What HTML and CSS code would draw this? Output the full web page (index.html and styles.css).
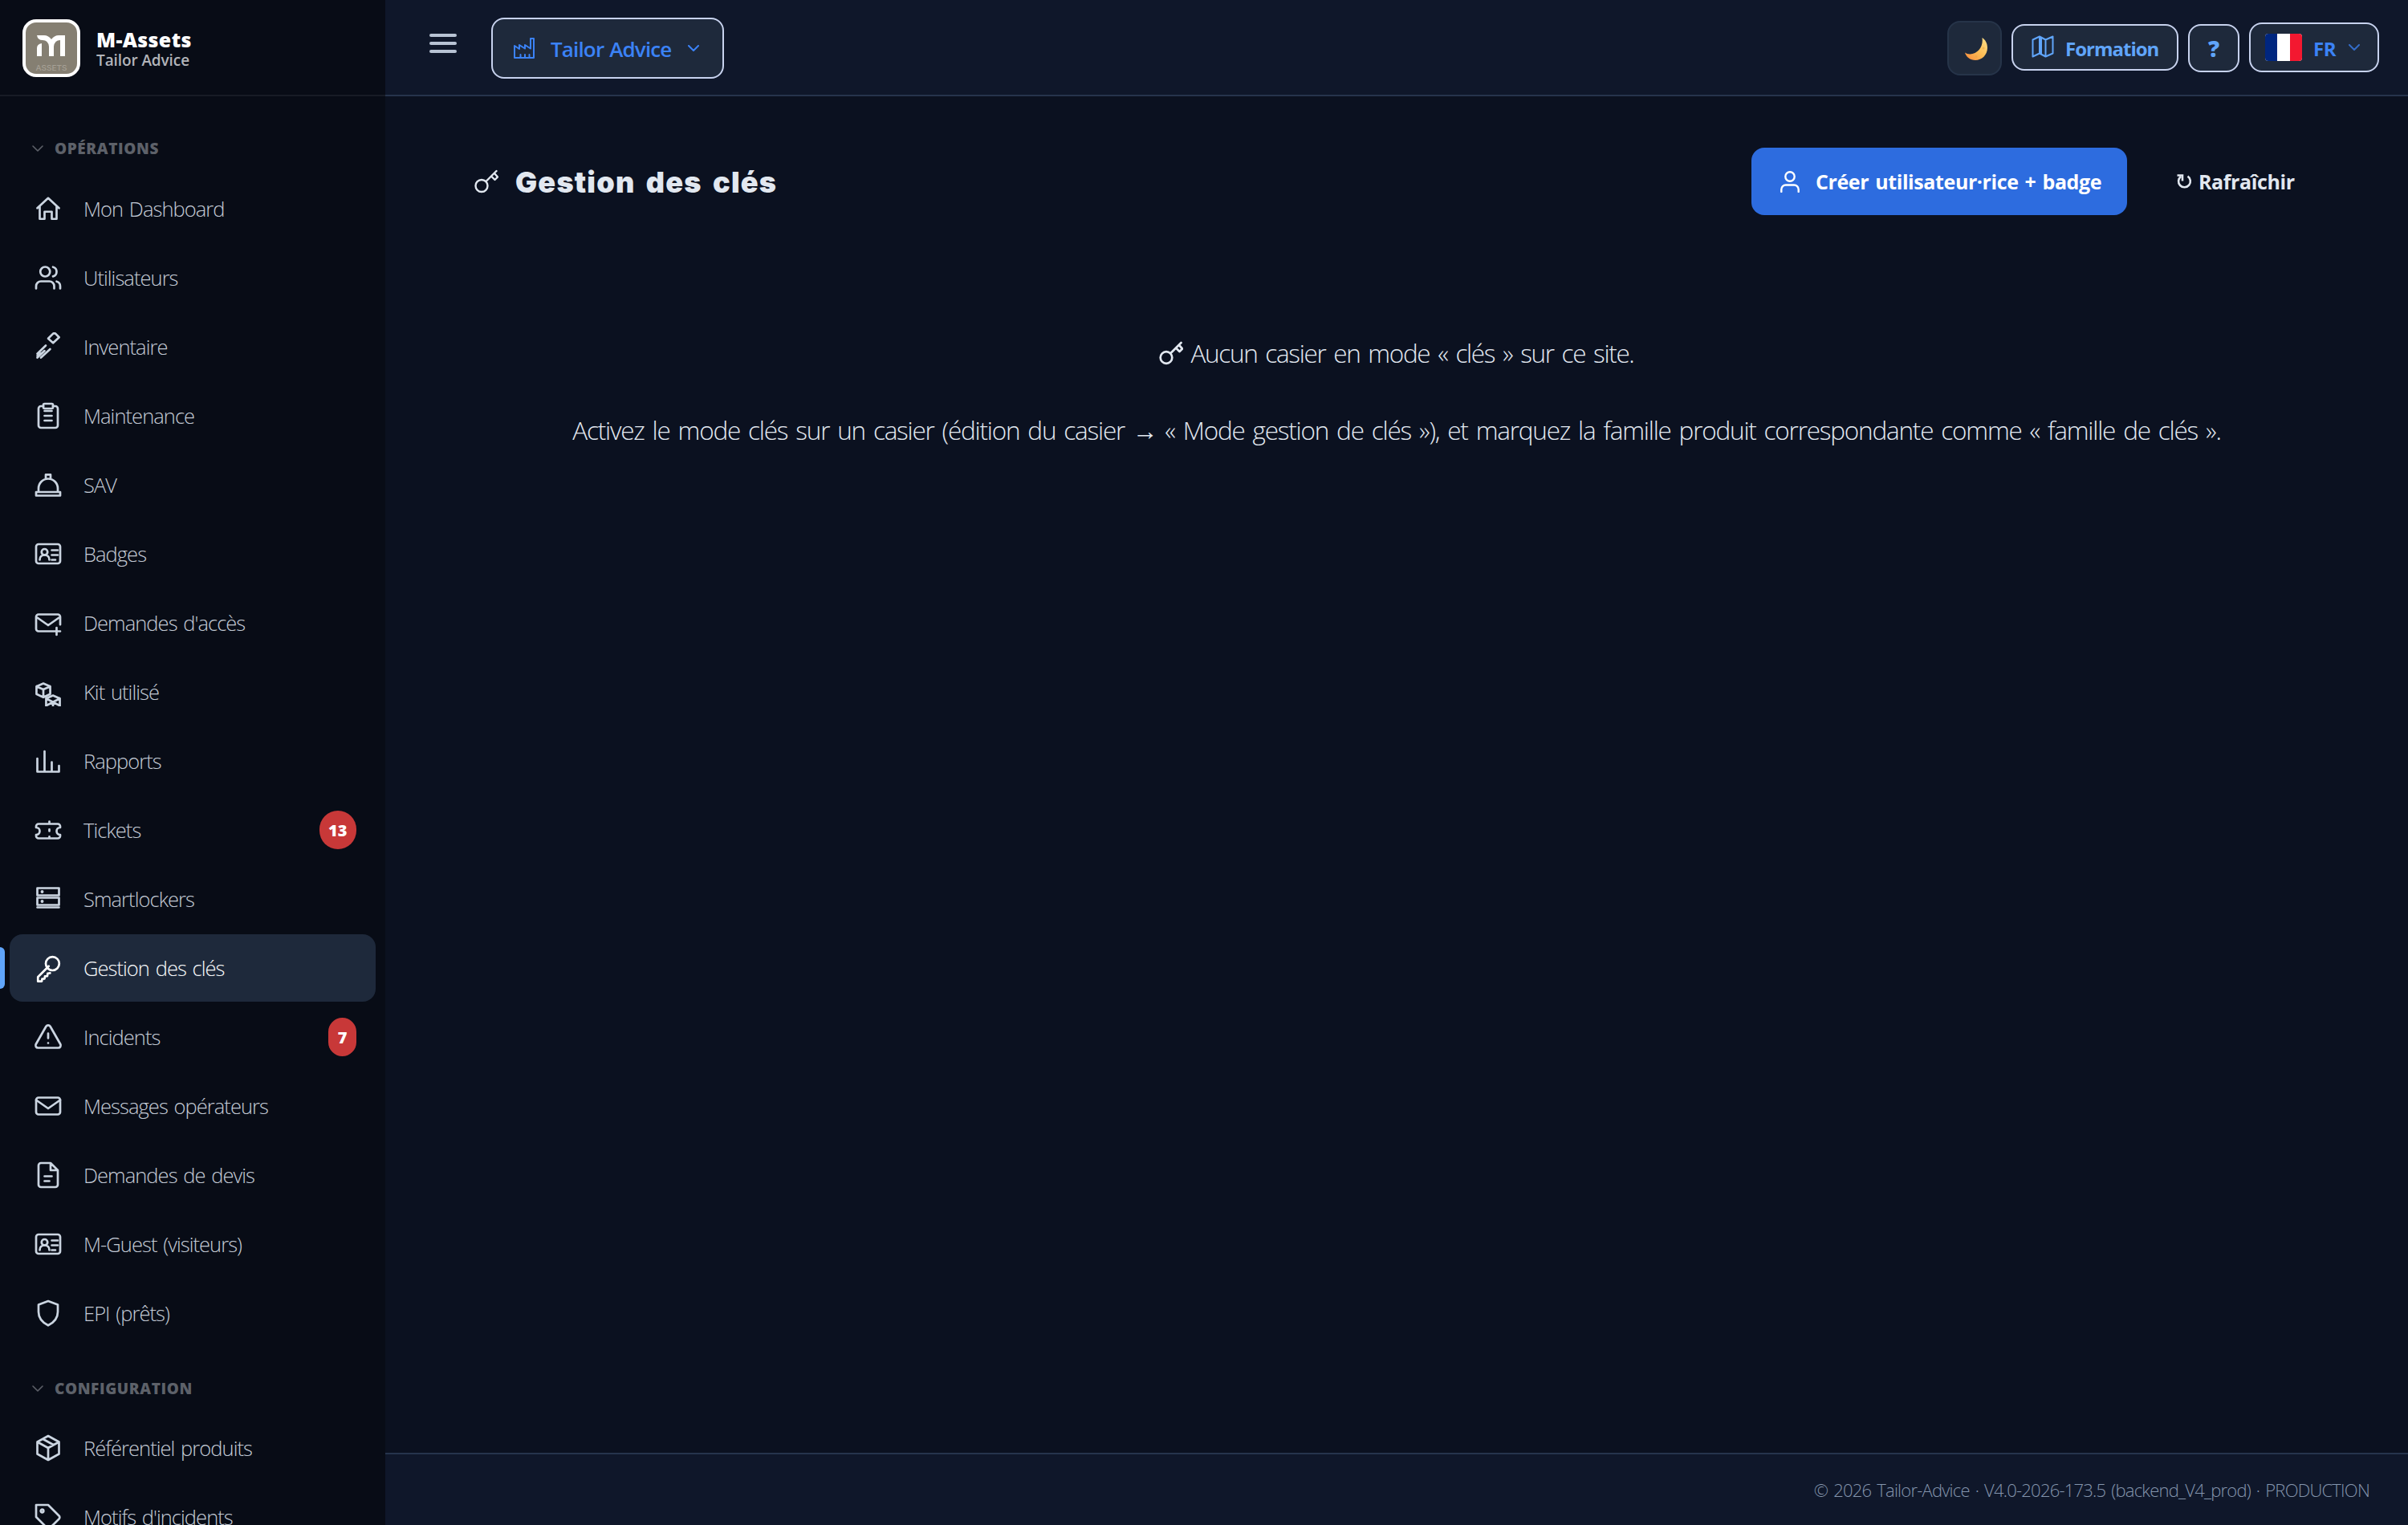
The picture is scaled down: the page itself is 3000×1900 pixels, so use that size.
FILE: index.html
```html
<!DOCTYPE html>
<html lang="fr">
<head>
<meta charset="utf-8">
<title>M-Assets – Gestion des clés</title>
<link rel="stylesheet" href="styles.css">
</head>
<body>
<div class="app">
  <aside class="sidebar">
    <div class="brand">
      <svg class="logo" viewBox="0 0 72 72"><rect x="2" y="2" width="68" height="68" rx="15" fill="#857f72" stroke="#fff" stroke-width="4"/><path d="M18 20h9q5 0 9 5 4-5 9-5h8v26h-6V26q-7 0-8 8v12h-6V34q-1-8-8-8-6 0-7-6zM18 46V36q0-5 6-6v16z" fill="#fff"/><text x="36" y="63.500" class="logo-word" text-anchor="middle" textLength="39" lengthAdjust="spacingAndGlyphs">ASSETS</text></svg>
      <div class="brand-text"><span class="brand-name">M-Assets</span><span class="brand-org">Tailor Advice</span></div>
    </div>
    <nav class="nav">
      <div class="section"><svg class="chev" viewBox="0 0 14 8"><path d="M1 1l6 6 6-6"/></svg><span>OPÉRATIONS</span></div>
      <a class="item"><svg class="ico" viewBox="0 0 24 24"><path d="M3 11.500l9-8.300 9 8.300M5 10v10.500h4V14.500h6v6h4V10"/></svg><span class="label">Mon Dashboard</span></a>
      <a class="item"><svg class="ico" viewBox="0 0 24 24"><circle cx="9.500" cy="7" r="4"/><path d="M2 21v-2a4 4 0 0 1 4-4h7a4 4 0 0 1 4 4v2M22 21v-2a4 4 0 0 0-3-3.870M16 3.130a4 4 0 0 1 0 7.750"/></svg><span class="label">Utilisateurs</span></a>
      <a class="item"><svg class="ico" viewBox="0 0 24 24"><path d="M12 5.200l4.300-4.300h1.600l3.200 3.300-5 4.700zM10 11l-7 6.800M13.600 14L6 21M3 21l6-5.600M3 19.500l3-2"/></svg><span class="label">Inventaire</span></a>
      <a class="item"><svg class="ico" viewBox="0 0 24 24"><path d="M16 4h2a2 2 0 0 1 2 2v14a2 2 0 0 1-2 2H6a2 2 0 0 1-2-2V6a2 2 0 0 1 2-2h2M9 8h6M9 12h6M9 16h6"/><rect x="8" y="2" width="8" height="4" rx="1"/></svg><span class="label">Maintenance</span></a>
      <a class="item"><svg class="ico" viewBox="0 0 24 24"><path d="M4 18v-3a8 8 0 0 1 16 0v3M10 7V3.600h4V7M2 18h20v3H2z"/></svg><span class="label">SAV</span></a>
      <a class="item"><svg class="ico" viewBox="0 0 24 24"><rect x="2" y="4" width="20" height="16" rx="2"/><circle cx="9" cy="10.500" r="2.500"/><path d="M5 17c0-2.500 1.800-4 4-4s4 1.500 4 4M15 9h5M15 13h5M15 17h3"/></svg><span class="label">Badges</span></a>
      <a class="item"><svg class="ico" viewBox="0 0 24 24"><path d="M22 13.500V7a2 2 0 0 0-2-2H4a2 2 0 0 0-2 2v10a2 2 0 0 0 2 2h18M19 16v6M2 7l10 7 10-7"/></svg><span class="label">Demandes d'accès</span></a>
      <a class="item"><svg class="ico" viewBox="0 0 24 24"><path d="M8 5l5.700 2.500v6.300L8 16.500l-5.700-2.700V7.500zM2.300 7.500L8 10l5.700-2.500M8 10v6.500M10.300 24.500v-7L16 15l5.700 2.500v7M10.300 17.500L21.700 23.500M21.700 17.500L10.300 23.500M16 21v3.500"/></svg><span class="label">Kit utilisé</span></a>
      <a class="item"><svg class="ico" viewBox="0 0 24 24"><path d="M3 10v11h18v-5M9 4v17M15 13v8"/></svg><span class="label">Rapports</span></a>
      <a class="item"><svg class="ico" viewBox="0 0 24 24"><path d="M2 10V9a2 2 0 0 1 2-2h16a2 2 0 0 1 2 2v1a3 3 0 0 0 0 6v1a2 2 0 0 1-2 2H4a2 2 0 0 1-2-2v-1a3 3 0 0 0 0-6zM13 5v2M13 11.500v1.500M13 17.500v1.500"/></svg><span class="label">Tickets</span><b class="count">13</b></a>
      <a class="item"><svg class="ico" viewBox="0 0 24 24"><path d="M3 3h18v6H3zM3 11h18v6H3zM3 19h18"/><path d="M7 6h.010M7 14h.010" stroke-width="2.600"/></svg><span class="label">Smartlockers</span></a>
      <a class="item active"><svg class="ico" viewBox="0 0 24 24"><circle cx="15.600" cy="8.400" r="5.600"/><path d="M12.500 10.500L3.500 19.500v3.600h3.200l.3-2 2-.2.300-2 2-.2.300-2.200 2-.2"/></svg><span class="label">Gestion des clés</span></a>
      <a class="item"><svg class="ico" viewBox="0 0 24 24"><path d="M10.290 3.160L1.820 18a2 2 0 0 0 1.710 3h16.940a2 2 0 0 0 1.710-3L13.710 3.160a2 2 0 0 0-3.420 0zM12 9v4M12 17h.010"/></svg><span class="label">Incidents</span><b class="count">7</b></a>
      <a class="item"><svg class="ico" viewBox="0 0 24 24"><rect x="2" y="5" width="20" height="14" rx="2"/><path d="M2 7l10 7 10-7"/></svg><span class="label">Messages opérateurs</span></a>
      <a class="item"><svg class="ico" viewBox="0 0 24 24"><path d="M14 2H6a2 2 0 0 0-2 2v16a2 2 0 0 0 2 2h12a2 2 0 0 0 2-2V8zM14 2v6h6M9 13h6M9 17h4"/></svg><span class="label">Demandes de devis</span></a>
      <a class="item"><svg class="ico" viewBox="0 0 24 24"><rect x="2" y="4" width="20" height="16" rx="2"/><circle cx="9" cy="10.500" r="2.500"/><path d="M5 17c0-2.500 1.800-4 4-4s4 1.500 4 4M15 9h5M15 13h5M15 17h3"/></svg><span class="label">M-Guest (visiteurs)</span></a>
      <a class="item"><svg class="ico" viewBox="0 0 24 24"><path d="M12 2l8 3v6c0 5-3 8.700-8 11.200C7 19.700 4 16 4 11V5z"/></svg><span class="label">EPI (prêts)</span></a>
      <div class="section second"><svg class="chev" viewBox="0 0 14 8"><path d="M1 1l6 6 6-6"/></svg><span>CONFIGURATION</span></div>
      <a class="item"><svg class="ico" viewBox="0 0 24 24"><path d="M12 2l9 5v10l-9 5-9-5V7zM3 7l9 5 9-5M12 12v10M7.500 4.500l9 5"/></svg><span class="label">Référentiel produits</span></a>
      <a class="item"><svg class="ico" viewBox="0 0 24 24"><path d="M2 2h10l9 9a1.800 1.800 0 0 1 0 2.600L13.600 21a1.800 1.800 0 0 1-2.600 0L2 12z"/><circle cx="7" cy="7" r="1.200"/></svg><span class="label">Motifs d'incidents</span></a>
    </nav>
  </aside>
  <div class="page">
    <header class="topbar">
      <div class="burger"><i></i><i></i><i></i></div>
      <div class="btn site">
        <svg class="factory" viewBox="0 0 28 28"><path d="M2 26V11l6 4v-5l7 4.500V10l7 4.500V2h4v24zM9.500 26v-4M15 26v-4M20.500 26v-4"/></svg>
        <span class="site-name">Tailor Advice</span>
        <svg class="chev" viewBox="0 0 14 8"><path d="M1 1l6 6 6-6"/></svg>
      </div>
      <div class="tools">
        <div class="btn moon"><svg viewBox="0 0 28 28"><defs><linearGradient id="m" x1="0" y1="1" x2="1" y2="0"><stop offset="0" stop-color="#f98a3c"/><stop offset=".5" stop-color="#fdbd55"/><stop offset="1" stop-color="#fde08a"/></linearGradient></defs><path d="M21.500 0C25.500 2.500 28 7 28 12.500 28 21.500 21 28 13 28 6.500 28 1.500 24 0 18.500c2.500 1.800 6 2.400 9.500 1.500C18 18 23 9.500 21.500 0z" fill="url(#m)"/><circle cx="14" cy="23.500" r="1.500" fill="#f0a848"/><circle cx="23" cy="13" r="1.500" fill="#f0b552"/></svg></div>
        <div class="btn formation"><svg viewBox="0 0 28 28"><path d="M1.500 5.500L10 1.500l7.500 4 9-4v21l-9 4-7.500-4-8.500 4zM10 1.500v21M12 2.500v20.500M17.500 5.500v21"/></svg><span>Formation</span></div>
        <div class="btn help"><span>?</span></div>
        <div class="btn lang"><span class="flag"><i></i><i></i><i></i></span><span class="code">FR</span><svg class="chev" viewBox="0 0 14 8"><path d="M1 1l6 6 6-6"/></svg></div>
      </div>
    </header>
    <main class="content">
      <div class="head">
        <svg class="key" viewBox="0 0 30 30"><circle cx="9" cy="20.500" r="7.500"/><path d="M14.500 15L27.500 2M21 8.500l4.500 4.500 3.500-3.500-4-4.500"/></svg>
        <h1>Gestion des clés</h1>
        <div class="primary"><svg viewBox="0 0 24 27"><circle cx="12" cy="7" r="5.700"/><path d="M1.300 26v-3a5.500 5.500 0 0 1 5.500-5.500h10.400a5.500 5.500 0 0 1 5.500 5.500v3"/></svg><span>Créer utilisateur·rice + badge</span></div>
        <div class="refresh"><svg viewBox="0 0 20 22"><path d="M6 5a7.400 7.400 0 1 0 8.500-.3M1.500 3.500h6.500v7"/></svg><span>Rafraîchir</span></div>
      </div>
      <div class="empty">
        <p class="one"><svg class="key" viewBox="0 0 30 30"><circle cx="9" cy="20.500" r="7.300"/><path d="M14.500 15L27.500 2M21 8.500l4.500 4.500 3.500-3.500-4-4.500"/></svg><span>Aucun casier en mode « clés » sur ce site.</span></p>
        <p class="two">Activez le mode clés sur un casier (édition du casier → « Mode gestion de clés »), et marquez la famille produit correspondante comme « famille de clés ».</p>
      </div>
    </main>
    <footer class="footer">© 2026 Tailor-Advice · V4.0-2026-173.5 (backend_V4_prod) · PRODUCTION</footer>
  </div>
</div>
</body>
</html>
```
FILE: styles.css
```css
* { box-sizing: border-box; }
body { margin: 0; font-family: "Open Sans", "Noto Sans", sans-serif; color: #e2e8f0; background: #0b1120; }
svg { display: block; flex: none; overflow: hidden; fill: none; stroke: currentColor; stroke-width: 2; stroke-linecap: round; stroke-linejoin: round; }
span, h1, p { white-space: nowrap; }
.app { display: flex; width: 3000px; height: 1900px; overflow: hidden; }

.sidebar { width: 480px; flex: none; height: 1900px; overflow: hidden; background: #080c16; }
.brand { height: 120px; padding: 0 0 0 28px; display: flex; align-items: center; gap: 20px; border-bottom: 2px solid #171b25; }
.logo { width: 72px; height: 72px; margin-top: 2px; stroke: none; }
.logo-word { font-family: Inter, sans-serif; font-size: 9px; font-weight: 500; fill: #a5a095; }
.brand-text { display: flex; flex-direction: column; padding-top: 3px; }
.brand-name { font-size: 25px; font-weight: 800; line-height: 28px; color: #fff; letter-spacing: .35px; }
.brand-org { font-size: 19px; font-weight: 600; line-height: 24px; color: #b2b4b9; letter-spacing: -.1px; }
.nav { padding: 14px 12px 0; display: flex; flex-direction: column; gap: 2px; }
.section { height: 82px; padding: 20px 0 0 28px; display: flex; align-items: center; gap: 14px; color: #5d6169; font-size: 19px; font-weight: 800; letter-spacing: .6px; }
.section.second { height: 80px; }
.chev { width: 14px; height: 8px; }
.section .chev { stroke-width: 1.6; }
.item { position: relative; height: 84px; flex: none; display: flex; align-items: center; padding: 0 24px 0 30px; border-radius: 16px; color: #cbd5e1; }
.ico { width: 36px; height: 36px; stroke-width: 1.8; }
.label { margin-left: 26px; font-size: 25.5px; font-weight: 300; line-height: 36px; letter-spacing: -.95px; word-spacing: 2px; color: #c3cad5; }
.count { margin-left: auto; height: 48px; padding: 0 11.5px; border-radius: 24px; background: #c83838; color: #fff; font-size: 20px; font-weight: 800; line-height: 49px; }
.active { background: #1e293b; color: #fff; }
.active .label { color: #f8fafc; }
.active::before { content: ""; position: absolute; left: -12px; top: 16px; width: 6px; height: 52px; border-radius: 0 6px 6px 0; background: #60a5fa; }

.page { flex: 1; display: flex; flex-direction: column; }
.topbar { height: 120px; flex: none; display: flex; align-items: center; padding: 0 36px 0 55px; background: #0f172a; border-bottom: 2px solid #26344c; }
.burger { width: 34px; display: flex; flex-direction: column; gap: 6px; margin: -10px 43px 0 0; }
.burger i { height: 4px; border-radius: 2px; background: #b8c3d4; }
.btn { display: flex; align-items: center; background: #1e293b; border: 2px solid #c7d2ee; border-radius: 16px; }
.site { width: 290px; height: 76px; margin-top: 2px; padding: 0 29px 0 25px; color: #3b82f6; }
.factory { width: 28px; height: 28px; margin-right: 19px; }
.site-name { padding-top: 1px; font-size: 26px; font-weight: 600; letter-spacing: -.85px; word-spacing: 1px; }
.site .chev { margin-left: auto; }
.tools { margin-left: auto; display: flex; align-items: center; gap: 12px; }
.moon { width: 68px; height: 68px; margin-top: 2px; justify-content: center; border-color: #263449; padding: 2px 0 0 4px; }
.moon svg { width: 28px; height: 28px; stroke: none; }
.formation { width: 208px; height: 58px; padding-left: 23px; color: #60a5fa; font-size: 24px; font-weight: 700; letter-spacing: -1px; }
.formation svg { width: 28px; height: 28px; margin: -3px 14px 0 0; }
.formation span { padding-top: 2px; }
.help { width: 64px; height: 60px; margin-top: 2px; justify-content: center; color: #60a5fa; font-size: 28px; font-weight: 800; }
.lang { width: 162px; height: 62px; padding: 0 22px 0 18px; color: #3b82f6; font-size: 24px; font-weight: 700; }
.code { padding-top: 2px; letter-spacing: -.5px; }
.flag { width: 46px; height: 34px; margin-right: 14px; display: flex; border-radius: 4px; overflow: hidden; background: #fff; }
.flag i { flex: 1; }
.flag i:first-child { background: #00267f; }
.flag i:last-child { background: #f31830; }
.lang .chev { margin-left: auto; opacity: .75; }

.content { flex: 1; }
.head { height: 84px; margin: 64px 142px 0 111px; display: flex; align-items: center; }
.key { width: 30px; height: 30px; stroke-width: 2.4; }
.head .key { margin-right: 21px; }
h1 { margin: 0; padding-top: 2px; font-family: Inter, "Open Sans", sans-serif; font-size: 36px; font-weight: 900; line-height: 50px; letter-spacing: 1.2px; word-spacing: 5px; }
.primary { margin-left: auto; width: 468px; height: 84px; padding-left: 36px; display: flex; align-items: center; border-radius: 16px; background: #2d6cdf; color: #fff; font-size: 25px; font-weight: 700; letter-spacing: -.4px; word-spacing: 1.9px; }
.primary svg { width: 24px; height: 27px; margin-right: 20px; stroke-width: 2.4; }
.refresh { margin-left: 61px; display: flex; align-items: center; font-size: 25px; font-weight: 700; letter-spacing: -.4px; width: 147px; }
.refresh svg { width: 20px; height: 22px; margin-right: 8px; stroke-width: 2.6; stroke-linecap: butt; stroke-linejoin: miter; }
.empty { margin-top: 148px; display: flex; flex-direction: column; align-items: center; gap: 48px; font-size: 31.5px; font-weight: 300; line-height: 48px; word-spacing: 3px; }
.empty p { margin: 0; display: flex; align-items: center; }
.one { letter-spacing: -1.33px; }
.one .key { margin-right: 9px; stroke-width: 2.7; }
.two { letter-spacing: -1.21px; }
.footer { height: 90px; flex: none; padding-right: 48px; display: flex; align-items: center; justify-content: flex-end; background: #0f172a; border-top: 2px solid #26344c; color: #8495ad; font-size: 22px; font-weight: 300; letter-spacing: -.78px; word-spacing: 2px; }
```
